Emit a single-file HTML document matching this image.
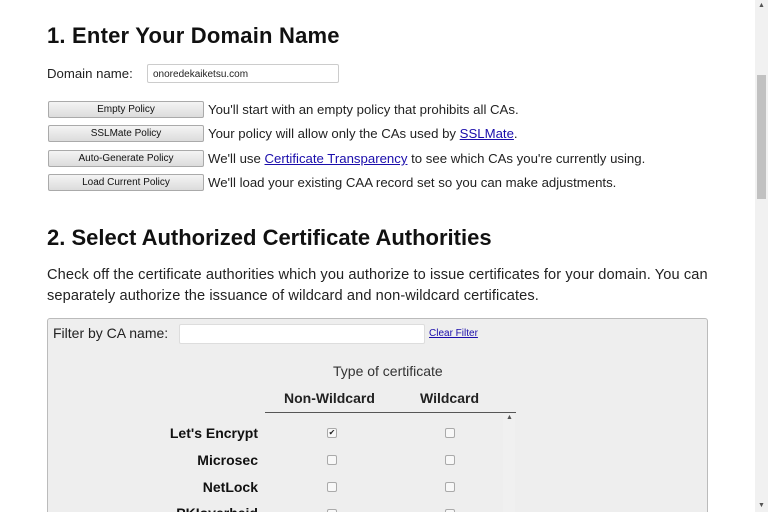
<!DOCTYPE html>
<html><head><style>
html,body{margin:0;width:768px;height:512px;overflow:hidden}
body{background:#fff;font-family:"Liberation Sans",sans-serif;color:#222;position:relative}
.a{position:absolute;white-space:nowrap}
h1{position:absolute;margin:0;font-size:22px;font-weight:bold;left:47px;color:#111}
.btn{position:absolute;left:48px;width:154px;height:15px;border:1px solid #aaa;border-radius:2px;background:linear-gradient(#f4f4f4,#dcdcdc);font-size:10px;text-align:center;line-height:16px;color:#111}
.t{font-size:13.2px}
a{color:#1a0dab;text-decoration:underline}
.cb{position:absolute;width:8px;height:8px;border:1px solid #aaa;border-radius:2px;background:#f8f8f8}
.lbl{position:absolute;right:510px;font-size:14px;font-weight:bold;color:#111}
</style></head><body>
<h1 style="top:23px;letter-spacing:0.2px">1. Enter Your Domain Name</h1>
<div class="a t" style="left:47px;top:66px">Domain name:</div>
<div class="a" style="left:147px;top:64px;border:1px solid #ccc;border-radius:2px;font-size:10px;line-height:19px;padding-left:5px;box-sizing:border-box;width:192px;height:19px">onoredekaiketsu.com</div>
<div class="btn" style="top:101px">Empty Policy</div>
<div class="btn" style="top:125px">SSLMate Policy</div>
<div class="btn" style="top:150px">Auto-Generate Policy</div>
<div class="btn" style="top:174px">Load Current Policy</div>
<div class="a t" style="left:208px;top:102px">You'll start with an empty policy that prohibits all CAs.</div>
<div class="a t" style="left:208px;top:126px">Your policy will allow only the CAs used by <a>SSLMate</a>.</div>
<div class="a t" style="left:208px;top:151px">We'll use <a>Certificate Transparency</a> to see which CAs you're currently using.</div>
<div class="a t" style="left:208px;top:175px">We'll load your existing CAA record set so you can make adjustments.</div>
<h1 style="top:225px">2. Select Authorized Certificate Authorities</h1>
<div class="a" style="left:47px;top:265px;line-height:21px;font-size:14.6px;letter-spacing:0.1px">Check off the certificate authorities which you authorize to issue certificates for your domain. You can<br>separately authorize the issuance of wildcard and non-wildcard certificates.</div>
<div class="a" style="left:47px;top:318px;width:659px;height:200px;background:#eee;border:1px solid #bbb;border-radius:3px"></div>
<div class="a" style="left:53px;top:325px;font-size:14px">Filter by CA name:</div>
<div class="a" style="left:179px;top:324px;width:244px;height:18px;background:#fff;border:1px solid #ddd;border-radius:2px"></div>
<div class="a" style="left:429px;top:328px;font-size:10px"><a>Clear Filter</a></div>
<div class="a" style="left:333px;top:363px;color:#333;font-size:14px">Type of certificate</div>
<div class="a" style="left:284px;top:390px;font-size:14px;font-weight:bold">Non-Wildcard</div>
<div class="a" style="left:420px;top:390px;font-size:14px;font-weight:bold">Wildcard</div>
<div class="a" style="left:265px;top:412px;width:251px;height:1px;background:#555"></div>
<div class="a" style="left:503px;top:414px;width:12px;height:98px;background:#f0f0f0"></div>
<div class="a" style="left:506px;top:414px;font-size:7px;color:#555">▲</div>
<div class="lbl" style="top:425px">Let's Encrypt</div>
<div class="lbl" style="top:452px">Microsec</div>
<div class="lbl" style="top:479px">NetLock</div>
<div class="lbl" style="top:505px">PKIoverheid</div>
<div class="cb" style="left:327px;top:428px;font-size:8px;line-height:8px;text-align:center">✔</div>
<div class="cb" style="left:445px;top:428px"></div>
<div class="cb" style="left:327px;top:455px"></div><div class="cb" style="left:445px;top:455px"></div>
<div class="cb" style="left:327px;top:482px"></div><div class="cb" style="left:445px;top:482px"></div>
<div class="cb" style="left:327px;top:509px"></div><div class="cb" style="left:445px;top:509px"></div>
<div class="a" style="left:755px;top:0;width:13px;height:512px;background:#f1f1f1"></div>
<div class="a" style="left:757px;top:75px;width:9px;height:124px;background:#c1c1c1"></div>
<div class="a" style="left:758px;top:2px;font-size:7px;color:#555">▲</div>
<div class="a" style="left:758px;top:502px;font-size:7px;color:#555">▼</div>
</body></html>
